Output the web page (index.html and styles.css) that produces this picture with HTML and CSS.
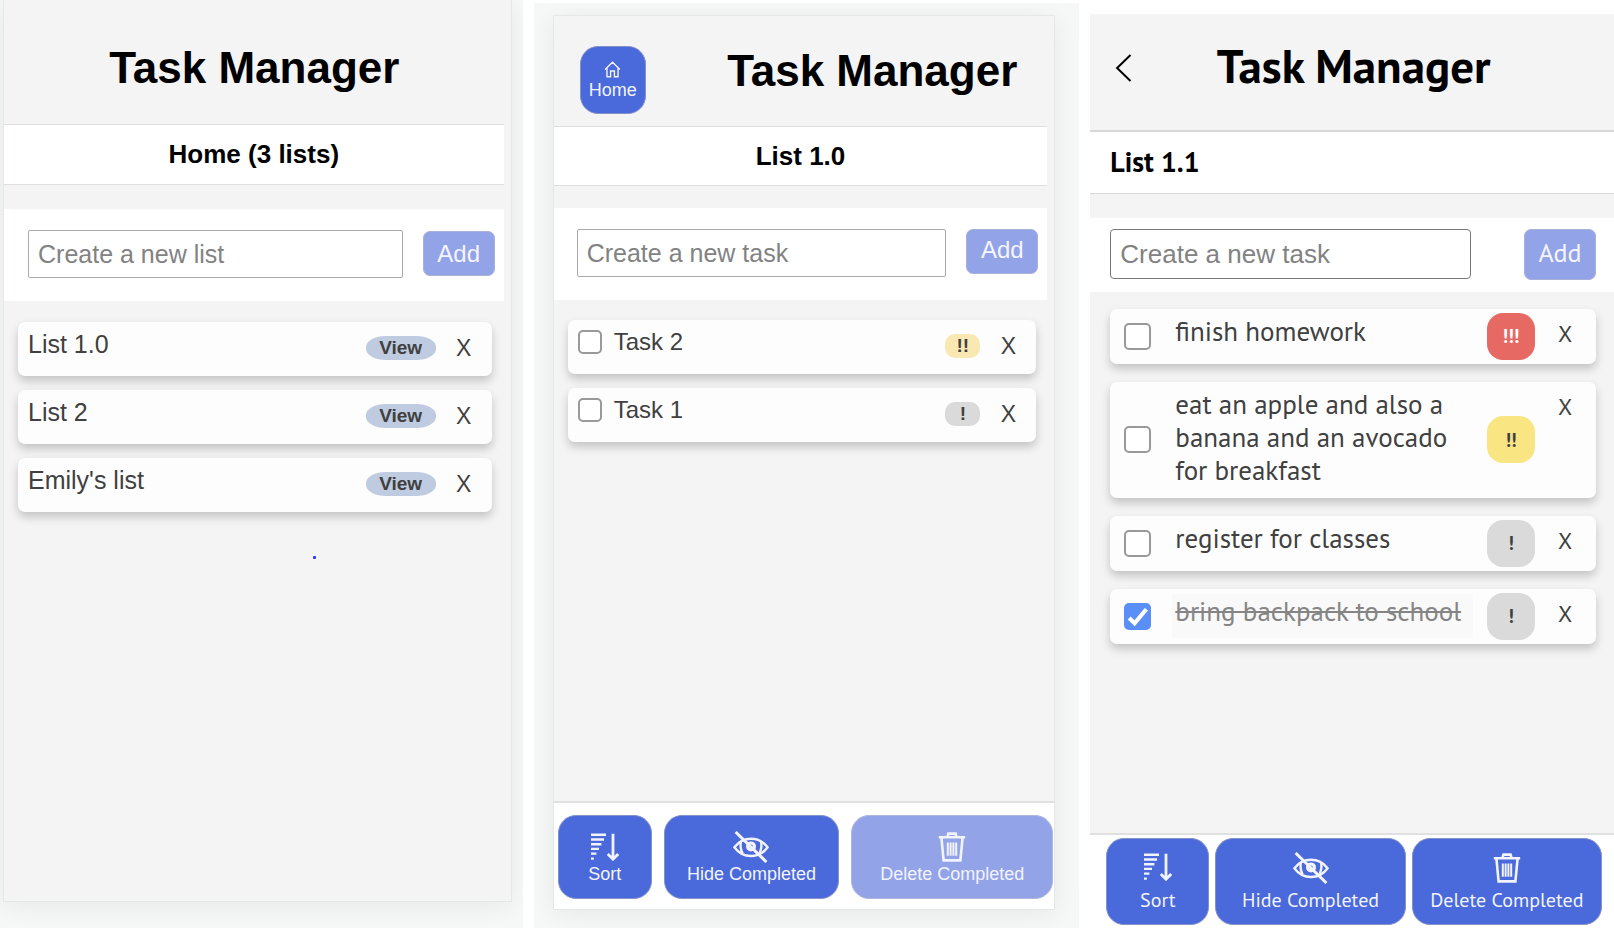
FILE: index.html
```html
<!DOCTYPE html>
<html lang="en">
<head>
<meta charset="utf-8">
<title>Task Manager</title>
<link rel="stylesheet" href="styles.css">
</head>
<body>
<svg class="sprite" aria-hidden="true">
  <symbol id="icon-sort" viewBox="0 0 28 28">
    <g stroke="currentColor" stroke-width="2.4" fill="none">
      <path d="M0 1.8H15M0 6.5H13M0 11.2H10.4M0 15.9H8M0 20.6H5.4M0 25.6H2.8"/>
      <path stroke-width="2.8" d="M22 .8V26M16.8 21L22 26.2L27.2 21"/>
    </g>
  </symbol>
  <symbol id="icon-hide" viewBox="0 0 36 32">
    <g stroke="currentColor" fill="none" stroke-width="2.4">
      <path d="M1.4 16.2C10 5 26 5 34.6 16.2C26 28 10 28 1.4 16.2Z"/>
      <path d="M8 10.5Q6.4 16 9.6 22.4M28 10.5Q29.4 16 26.6 22"/>
      <circle cx="18" cy="15.4" r="3.4" stroke-width="3.2"/>
      <path stroke-width="3" d="M2.6 1L33.4 31"/>
    </g>
  </symbol>
  <symbol id="icon-trash" viewBox="0 0 28 30">
    <g stroke="currentColor" fill="none" stroke-width="2.6">
      <path d="M.8 5.2H27.2M9.6 4.6L10.4 1.6H17.6L18.4 4.6M3.4 5.4L5.6 28.4H22.4L24.6 5.4"/>
      <path stroke-width="2" d="M9.8 10.4V23.8M12.6 10.4V23.8M15.4 10.4V23.8M18.2 10.4V23.8"/>
    </g>
  </symbol>
</svg>

<div class="board">
  <section class="frame frame-home">
    <div class="panel">
      <header class="header"><h1 class="title">Task Manager</h1></header>
      <h2 class="subtitle">Home (3 lists)</h2>
      <form class="create">
        <input class="field" type="text" placeholder="Create a new list" aria-label="Create a new list">
        <button class="add" type="button" disabled>Add</button>
      </form>
      <ul class="items">
        <li class="card"><span class="name">List 1.0</span><button class="view" type="button">View</button><button class="remove" type="button">X</button></li>
        <li class="card"><span class="name">List 2</span><button class="view" type="button">View</button><button class="remove" type="button">X</button></li>
        <li class="card"><span class="name">Emily's list</span><button class="view" type="button">View</button><button class="remove" type="button">X</button></li>
      </ul>
      <span class="dot"></span>
    </div>
  </section>

  <section class="frame frame-list">
    <div class="panel">
      <header class="header">
        <button class="home" type="button">
          <svg class="home-icon" viewBox="0 0 16 16"><path d="M1 8L8 1.2L15 8M2.8 6.8V14.8H6.2V9.4H9.8V14.8H13.2V6.8" fill="none" stroke="currentColor" stroke-width="1.3"/></svg>
          Home
        </button>
        <h1 class="title">Task Manager</h1>
      </header>
      <h2 class="subtitle">List 1.0</h2>
      <form class="create">
        <input class="field" type="text" placeholder="Create a new task" aria-label="Create a new task">
        <button class="add" type="button" disabled>Add</button>
      </form>
      <ul class="items">
        <li class="card"><input class="check" type="checkbox" id="a2"><label class="name" for="a2">Task 2</label><button class="priority medium" type="button">!!</button><button class="remove" type="button">X</button></li>
        <li class="card"><input class="check" type="checkbox" id="a1"><label class="name" for="a1">Task 1</label><button class="priority low" type="button">!</button><button class="remove" type="button">X</button></li>
      </ul>
      <footer class="toolbar">
        <button class="action" type="button"><svg class="icon-sort"><use href="#icon-sort"/></svg>Sort</button>
        <button class="action" type="button"><svg class="icon-hide"><use href="#icon-hide"/></svg>Hide Completed</button>
        <button class="action" type="button" disabled><svg class="icon-trash"><use href="#icon-trash"/></svg>Delete Completed</button>
      </footer>
    </div>
  </section>

  <section class="frame frame-new">
    <div class="panel">
      <header class="header">
        <button class="back" type="button" aria-label="Back"><svg class="back-icon" viewBox="0 0 16 28"><path d="M15 1L1.6 14L15 27" fill="none" stroke="currentColor" stroke-width="2"/></svg></button>
        <h1 class="title">Task Manager</h1>
      </header>
      <h2 class="subtitle">List 1.1</h2>
      <form class="create">
        <input class="field" type="text" placeholder="Create a new task" aria-label="Create a new task">
        <button class="add" type="button" disabled>Add</button>
      </form>
      <ul class="items">
        <li class="card"><input class="check" type="checkbox" id="b1"><label class="name" for="b1">finish homework</label><button class="priority high" type="button">!!!</button><button class="remove" type="button">X</button></li>
        <li class="card"><input class="check" type="checkbox" id="b2"><label class="name" for="b2">eat an apple and also a banana and an avocado for breakfast</label><button class="priority medium" type="button">!!</button><button class="remove" type="button">X</button></li>
        <li class="card"><input class="check" type="checkbox" id="b3"><label class="name" for="b3">register for classes</label><button class="priority low" type="button">!</button><button class="remove" type="button">X</button></li>
        <li class="card"><input class="check" type="checkbox" id="b4" checked><label class="name done" for="b4">bring backpack to school</label><button class="priority low" type="button">!</button><button class="remove" type="button">X</button></li>
      </ul>
      <footer class="toolbar">
        <button class="action" type="button"><svg class="icon-sort"><use href="#icon-sort"/></svg>Sort</button>
        <button class="action" type="button"><svg class="icon-hide"><use href="#icon-hide"/></svg>Hide Completed</button>
        <button class="action" type="button"><svg class="icon-trash"><use href="#icon-trash"/></svg>Delete Completed</button>
      </footer>
    </div>
  </section>
</div>
</body>
</html>
```

FILE: styles.css
```css
* { box-sizing: border-box; }
body { margin: 0; background: #fff; font-family: "Liberation Sans", Arial, sans-serif; color: #000; }
button, input { font: inherit; margin: 0; }
button { border: 0; padding: 0; background: none; color: inherit; }
h1, h2, ul { margin: 0; padding: 0; }
.sprite { display: none; }

.board { display: grid; grid-template-columns: 523fr 546fr 524fr; gap: 11px; min-height: 100vh; }
.frame { display: flex; min-width: 0; background: #f6f8f8; overflow: hidden; }
.panel { flex: 1; min-width: 0; display: flex; flex-direction: column; position: relative; background: #f4f4f4; }
.frame-home { padding: 0 12px 27px 4px; }
.frame-list { margin-top: 3px; padding: 13px 25px 19px 20px; }
.frame-home .panel, .frame-list .panel { box-shadow: 0 0 0 1px #e6e8e8, 0 4px 24px rgba(0, 0, 0, .07); }
.frame-new { margin-top: 14px; }

.header { display: flex; align-items: flex-start; }
.title { font-size: 44px; line-height: 52px; font-weight: 700; white-space: nowrap; }
.subtitle { font-size: 26px; line-height: 30px; font-weight: 700; text-align: center; background: #fff; border: solid #dedede; border-width: 1px 0; }
.create { display: flex; align-items: flex-start; background: #fff; }
.field { flex: 1; min-width: 0; height: 48px; padding: 0 9px; font-size: 25px; color: #333; background: #fff; border: 1px solid #aaa; border-radius: 2px; }
.field::placeholder { color: #828282; opacity: 1; }
.add { width: 72px; height: 45px; font-size: 24px; color: #f4f5fd; background: #93a3e8; border: 1px solid #a9b1d8; border-radius: 7px; }

.items { list-style: none; display: flex; flex-direction: column; gap: 14px; }
.card { display: flex; align-items: flex-start; min-height: 54px; background: #fdfdfd; border-radius: 7px; box-shadow: 0 5px 10px rgba(0, 0, 0, .2); color: #404040; }
.name { flex: 1; min-width: 0; font-size: 25px; line-height: 28px; }
.remove { width: 16px; font-size: 23px; line-height: 28px; }
.view, .priority { height: 24px; font-size: 19px; line-height: 24px; font-weight: 700; }
.view { width: 70px; background: #bfcbe0; border-radius: 20px / 11px; }
.priority { width: 35px; border-radius: 10px; }
.low { background: #dadada; }
.medium { background: #fae8b2; }
.high { background: #e66a63; color: #fff; }

.check { appearance: none; flex: none; width: 24px; height: 24px; background: #fff; border: 2px solid #999; border-radius: 5px; }
.check:checked { background: #5b8ff8 url("data:image/svg+xml,%3Csvg xmlns='http://www.w3.org/2000/svg' viewBox='0 0 26 26'%3E%3Cpath d='M5 14.5L10.2 19.5L21.5 6' fill='none' stroke='white' stroke-width='4'/%3E%3C/svg%3E") center / cover; border: 0; }

.toolbar { display: flex; margin-top: auto; background: #fff; border-top: 2px solid #e0e0e0; }
.action { display: flex; flex-direction: column; align-items: center; min-width: 0; color: #f2f4fd; background: #4a69da; border: 1px solid #8592c8; border-radius: 18px; font-size: 18px; line-height: 22px; white-space: nowrap; }
.action:disabled { background: #93a3e8; border-color: #b0b7da; }
.action svg { flex: none; }
.icon-sort { width: 28px; height: 28px; }
.icon-hide { width: 36px; height: 32px; }
.icon-trash { width: 28px; height: 30px; }

/* Home */
.frame-home .header { justify-content: center; padding: 42px 6px 30px 0; }
.frame-home .subtitle { margin-right: 7px; padding: 14px 0 15px; }
.frame-home .create { margin: 24px 7px 0 0; padding: 21px 9px 23px 24px; gap: 20px; }
.frame-home .add { margin-top: 1px; }
.frame-home .items { padding: 21px 19px 0 14px; }
.frame-home .card { padding: 8px 20px 8px 10px; }
.frame-home .view { margin: 6px 20px 0 0; }
.frame-home .remove { margin-top: 4px; }
.dot { position: absolute; left: 61%; top: 556px; width: 3px; height: 3px; background: #33f; border-radius: 1px; }

/* First list design */
.frame-list .header { justify-content: space-between; padding: 30px 37px 12px 26px; }
.frame-list .title { line-height: 49px; }
.home { display: flex; flex-direction: column; align-items: center; width: 66px; height: 68px; padding-top: 14px; color: #f2f4fd; background: #4a69da; border: 1px solid #8592c8; border-radius: 18px; font-size: 18px; line-height: 22px; }
.home-icon { width: 17px; height: 17px; margin-bottom: 1px; }
.frame-list .subtitle { margin-right: 7px; padding: 14px 0; }
.frame-list .create { margin: 22px 7px 0 0; padding: 21px 9px 23px 23px; gap: 20px; }
.frame-list .add { padding-bottom: 3px; }
.frame-list .items { padding: 20px 18px 0 14px; }
.frame-list .card { padding: 8px 20px 8px 10px; gap: 12px; }
.frame-list .name { font-size: 24px; }
.frame-list .check { margin-top: 2px; }
.frame-list .priority { margin: 6px 8px 0 0; }
.frame-list .remove { margin-top: 4px; }
.frame-list .toolbar { padding: 12px 1px 10px 4px; gap: 12px; }
.frame-list .action { height: 84px; padding-top: 17px; justify-content: space-between; padding-bottom: 13px; }
.frame-list .action:nth-child(1) { flex: 93; }
.frame-list .action:nth-child(2) { flex: 175; padding-top: 15px; }
.frame-list .action:nth-child(3) { flex: 202; padding-top: 16px; }

/* Second list design */
.frame-new { font-family: "PT Sans", Lato, sans-serif; }
.frame-new .header { padding: 26px 0 38px 25px; }
.back { width: 17px; height: 28px; margin-top: 14px; }
.back-icon { display: block; width: 17px; height: 28px; }
.frame-new .title { flex: 1; font-size: 47px; text-align: center; padding-right: 39px; }
.frame-new .subtitle { text-align: left; font-size: 28px; border-color: #d8d8d8; padding: 15px 20px 16px; border-width: 2px 0 1px; }
.frame-new .create { justify-content: space-between; margin-top: 24px; padding: 11px 18px 12px 20px; }
.frame-new .field { flex: 0 1 361px; height: 50px; font-family: "Liberation Sans", Arial, sans-serif; font-size: 26px; border-color: #777; border-radius: 4px; }
.frame-new .add { height: 51px; padding-bottom: 4px; font-size: 26px; }
.frame-new .items { padding: 17px 18px 0 20px; gap: 18px; }
.frame-new .card { min-height: 55px; padding: 5px 23px 6px 14px; }
.frame-new .check { align-self: center; width: 27px; height: 27px; margin-right: 21px; }
.frame-new .name { align-self: stretch; font-size: 27px; line-height: 33px; padding: 1px 3px 5px; }
.frame-new .done { background: #f9f9f9; color: #858585; text-decoration: line-through; }
.frame-new .priority { align-self: center; width: 48px; height: 47px; margin: -2px 22px -2px 14px; border-radius: 16px; }
.frame-new .medium { background: #fae583; }
.frame-new .remove { font-size: 23px; margin-top: 6px; }
.frame-new .toolbar { padding: 3px 12px 3px 16px; gap: 6px; }
.frame-new .action { height: 87px; padding: 14px 0 13px; justify-content: space-between; font-size: 20px; }
.frame-new .action:nth-child(1) { flex: 102; }
.frame-new .action:nth-child(2) { flex: 190; padding-top: 13px; }
.frame-new .action:nth-child(3) { flex: 190; }
```
